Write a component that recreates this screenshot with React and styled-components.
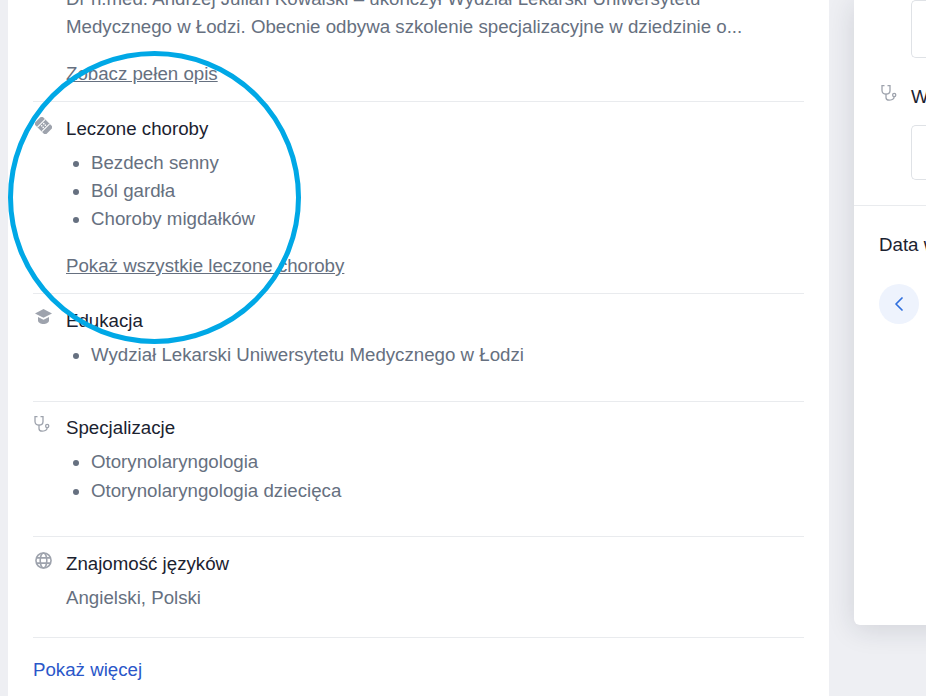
import React from 'react';
import styled, { createGlobalStyle } from 'styled-components';
import { ChevronLeft } from 'lucide-react';

const GlobalStyle = createGlobalStyle`
	html, body {
		margin: 0;
		height: 100%;
		overflow: hidden;
		background: #eeeff3;
		font-family: "Liberation Sans", Arial, sans-serif;
	}
`;

const Page = styled.div`
	position: relative;
	display: flex;
	align-items: flex-start;
	gap: 25px;
	width: 926px;
	height: 696px;
	padding-left: 8px;
	box-sizing: border-box;
	overflow: hidden;
`;

const MainCard = styled.main`
	position: relative;
	z-index: 1;
	flex: 0 0 821px;
	box-sizing: border-box;
	margin-top: -30px;
	height: 740px;
	padding: 0 25px;
	background: #fff;
`;

const SideCard = styled.aside`
	flex: 0 0 200px;
	box-sizing: border-box;
	height: 625px;
	background: #fff;
	border-bottom-left-radius: 6px;
	box-shadow: 0 4px 28px rgba(30, 35, 60, 0.14);
	overflow: hidden;
`;

const Section = styled.section`
	display: grid;
	grid-template-columns: 33px 1fr;
	padding: ${(p) => p.$top || 15}px 0 ${(p) => p.$bottom}px;
	border-top: ${(p) => (p.$first ? '0' : '1px solid #e9ebee')};
`;

const IconSlot = styled.div`
	color: #9ea3ad;
	line-height: 0;
	padding-left: ${(p) => p.$left}px;
`;

const Title = styled.h3`
	margin: 0 0 ${(p) => p.$gap || 8}px;
	font-size: 18.7px;
	font-weight: 400;
	line-height: 24px;
	color: #1b2230;
`;

const Body = styled.p`
	margin: 0;
	font-size: 18.7px;
	line-height: 28px;
	color: #667080;
`;

const Intro = styled(Body)`
	white-space: nowrap;
`;

const List = styled.ul`
	margin: 0;
	padding-left: 25px;
	font-size: 18.7px;
	line-height: ${(p) => p.$line || 28}px;
	color: #667080;
`;

const MutedLink = styled.a`
	display: block;
	margin-top: 21px;
	font-size: 18.7px;
	line-height: 24px;
	color: #667080;
	text-decoration: underline;
`;

const MoreLink = styled.a`
	display: block;
	padding-top: 20px;
	border-top: 1px solid #e9ebee;
	font-size: 18.7px;
	line-height: 24px;
	color: #2a57c9;
`;

const Field = styled.div`
	padding-left: 57px;
`;

const FieldBox = styled.div`
	height: ${(p) => p.$height}px;
	margin-top: ${(p) => p.$top}px;
	border: 1px solid #dfe2e6;
	border-right: 0;
	border-radius: 5px 0 0 5px;
	box-sizing: border-box;
`;

const FieldLabel = styled.div`
	display: flex;
	align-items: flex-start;
	gap: 14px;
	margin: 27px 0 0 27px;
	font-size: 18.7px;
	line-height: 24px;
	color: #1b2230;
	white-space: nowrap;

	svg {
		flex: 0 0 auto;
		color: #9ea3ad;
	}
`;

const Rule = styled.hr`
	margin: 25px 0 0;
	border: 0;
	border-top: 1px solid #e9ebee;
`;

const DateLabel = styled.div`
	margin: 27px 0 0 25px;
	font-size: 18.7px;
	line-height: 24px;
	color: #1b2230;
	white-space: nowrap;
`;

const RoundButton = styled.button`
	display: flex;
	align-items: center;
	justify-content: center;
	width: 40px;
	height: 40px;
	margin: 27px 0 0 25px;
	padding: 0;
	border: 0;
	border-radius: 50%;
	background: #eef3fd;
	color: #2f6fde;
`;

const Highlight = styled.div`
	position: absolute;
	z-index: 2;
	left: 8px;
	top: 51px;
	width: 293px;
	height: 293px;
	box-sizing: border-box;
	border: 5px solid #00a8e6;
	border-radius: 50%;
	pointer-events: none;
`;

const BandageIcon = () => (
	<svg width="17" height="17" viewBox="0 0 17 17">
		<g transform="rotate(45 8.5 8.5)">
			<rect x="0.5" y="3" width="16" height="11" rx="2" fill="currentColor" />
			<path d="M5.4 3V14M11.6 3V14" stroke="#fff" strokeWidth="1" />
			<circle cx="7.4" cy="7" r="0.8" fill="#fff" />
			<circle cx="9.6" cy="7" r="0.8" fill="#fff" />
			<circle cx="7.4" cy="10" r="0.8" fill="#fff" />
			<circle cx="9.6" cy="10" r="0.8" fill="#fff" />
		</g>
	</svg>
);

const CapIcon = () => (
	<svg width="17" height="15" viewBox="0 0 17 15" fill="currentColor">
		<path d="M8.5 0L17 4.4L8.5 8.8L0 4.4Z" />
		<path d="M3 7.9L8.5 10.8L14 7.9V11.4C14 13.4 11.2 15 8.5 15S3 13.4 3 11.4Z" />
	</svg>
);

const StethoscopeIcon = () => (
	<svg width="16" height="16" viewBox="0 0 16 16" fill="none" stroke="currentColor" strokeWidth="1.3" strokeLinecap="round">
		<path d="M3 .7H1V5.5C1 7.8 2.8 9.2 5 9.2S9 7.8 9 5.5V.7H7" />
		<path d="M5 9.2V12.4C5 14.2 6.3 15.2 8.2 15.2S13 14.2 13 12.4V11.6" />
		<circle cx="13.2" cy="10" r="1.6" />
	</svg>
);

const GlobeIcon = () => (
	<svg width="17" height="17" viewBox="0 0 18 18" fill="none" stroke="currentColor" strokeWidth="1.7">
		<circle cx="9" cy="9" r="8" />
		<ellipse cx="9" cy="9" rx="3.5" ry="8" />
		<path d="M1.6 6.2H16.4M1.6 11.8H16.4" />
	</svg>
);

export default function App() {
	return (
		<>
			<GlobalStyle />
			<Page>
				<MainCard>
					<Section $first $bottom={15}>
						<div />
						<div>
							<Intro>Dr n.med. Andrzej Julian Kowalski – ukończył Wydział Lekarski Uniwersytetu</Intro>
							<Intro>Medycznego w Łodzi. Obecnie odbywa szkolenie specjalizacyjne w dziedzinie o...</Intro>
							<MutedLink>Zobacz pełen opis</MutedLink>
						</div>
					</Section>
					<Section $bottom={15}>
						<IconSlot $left={2}><BandageIcon /></IconSlot>
						<div>
							<Title>Leczone choroby</Title>
							<List>
								<li>Bezdech senny</li>
								<li>Ból gardła</li>
								<li>Choroby migdałków</li>
							</List>
							<MutedLink>Pokaż wszystkie leczone choroby</MutedLink>
						</div>
					</Section>
					<Section $bottom={32}>
						<IconSlot $left={2}><CapIcon /></IconSlot>
						<div>
							<Title>Edukacja</Title>
							<List>
								<li>Wydział Lekarski Uniwersytetu Medycznego w Łodzi</li>
							</List>
						</div>
					</Section>
					<Section $top={14} $bottom={31}>
						<IconSlot $left={1}><StethoscopeIcon /></IconSlot>
						<div>
							<Title $gap={7}>Specjalizacje</Title>
							<List $line={29}>
								<li>Otorynolaryngologia</li>
								<li>Otorynolaryngologia dziecięca</li>
							</List>
						</div>
					</Section>
					<Section $bottom={25}>
						<IconSlot $left={2}><GlobeIcon /></IconSlot>
						<div>
							<Title>Znajomość języków</Title>
							<Body>Angielski, Polski</Body>
						</div>
					</Section>
					<MoreLink>Pokaż więcej</MoreLink>
				</MainCard>
				<SideCard>
					<Field>
						<FieldBox $height={58} $top={0} />
					</Field>
					<FieldLabel>
						<StethoscopeIcon />
						Wybierz specjalizację
					</FieldLabel>
					<Field>
						<FieldBox $height={55} $top={16} />
					</Field>
					<Rule />
					<DateLabel>Data wizyty</DateLabel>
					<RoundButton><ChevronLeft size={24} strokeWidth={1.75} /></RoundButton>
				</SideCard>
				<Highlight />
			</Page>
		</>
	);
}
